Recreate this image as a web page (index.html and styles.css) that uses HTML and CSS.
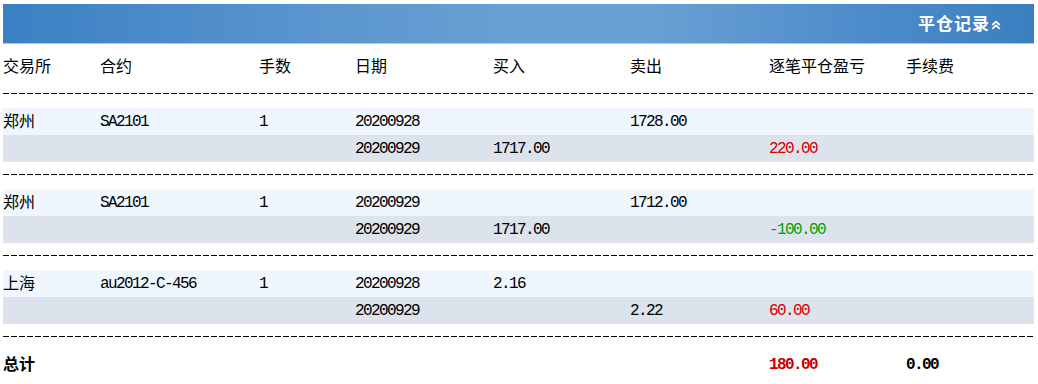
FILE: index.html
```html
<!DOCTYPE html>
<html lang="zh-CN">
<head>
<meta charset="utf-8">
<title>平仓记录</title>
<link rel="stylesheet" href="styles.css">
</head>
<body>
<div class="panel">
  <div class="panel-head">
    <span class="panel-title">平仓记录</span>
    <svg class="chev" width="10" height="10" viewBox="0 0 10 10" aria-hidden="true">
      <path d="M1.2 5 L5 1.6 L8.8 5" fill="none" stroke="#fff" stroke-width="1.7"/>
      <path d="M1.2 8.8 L5 5.4 L8.8 8.8" fill="none" stroke="#fff" stroke-width="1.7"/>
    </svg>
  </div>

  <div class="grid head">
    <div class="cn">交易所</div><div class="cn">合约</div><div class="cn">手数</div><div class="cn">日期</div>
    <div class="cn">买入</div><div class="cn">卖出</div><div class="cn">逐笔平仓盈亏</div><div class="cn">手续费</div>
  </div>
  <div class="sep"></div>

  <div class="grid row odd">
    <div class="cn">郑州</div><div>SA2101</div><div>1</div><div>20200928</div><div></div><div>1728.00</div><div></div><div></div>
  </div>
  <div class="grid row even">
    <div></div><div></div><div></div><div>20200929</div><div>1717.00</div><div></div><div class="red">220.00</div><div></div>
  </div>
  <div class="sep"></div>

  <div class="grid row odd">
    <div class="cn">郑州</div><div>SA2101</div><div>1</div><div>20200929</div><div></div><div>1712.00</div><div></div><div></div>
  </div>
  <div class="grid row even">
    <div></div><div></div><div></div><div>20200929</div><div>1717.00</div><div></div><div class="green">-100.00</div><div></div>
  </div>
  <div class="sep"></div>

  <div class="grid row odd">
    <div class="cn">上海</div><div>au2012-C-456</div><div>1</div><div>20200928</div><div>2.16</div><div></div><div></div><div></div>
  </div>
  <div class="grid row even">
    <div></div><div></div><div></div><div>20200929</div><div></div><div>2.22</div><div class="red">60.00</div><div></div>
  </div>
  <div class="sep"></div>

  <div class="grid row total">
    <div class="cn">总计</div><div></div><div></div><div></div><div></div><div></div><div class="red">180.00</div><div>0.00</div>
  </div>
</div>
</body>
</html>
```

FILE: styles.css
```css
html, body {
  background: #fff;
}
body {
  margin: 4px 4px 0 3px;
  color: #000;
  font-family: "Liberation Mono", "Noto Sans CJK SC", monospace;
  font-size: 16px;
}
.panel {
  width: 1031px;
}
.panel-head {
  height: 39px;
  border-bottom: 1px solid #a9c9ea;
  background: linear-gradient(to right, #3b80c4 0%, #5592cd 25%, #6aa1d4 50%, #6aa1d4 62%, #4f8dcc 82%, #3b7fc2 100%);
  display: flex;
  align-items: center;
  justify-content: flex-end;
  padding-right: 33px;
  gap: 1px;
}
.panel-title {
  color: #fff;
  font-family: "Noto Sans CJK SC", sans-serif;
  font-size: 17px;
  letter-spacing: 1px;
  font-weight: bold;
  line-height: 1;
  padding-bottom: 2px;
}
.chev {
  display: block;
  margin-top: 2px;
}
.grid {
  display: grid;
  grid-template-columns: 97px 159px 96px 138px 137px 139px 137px 1fr;
  align-items: center;
}
.head {
  height: 37px;
  padding-top: 9px;
  box-sizing: border-box;
}
.row {
  height: 27px;
  line-height: 1;
  letter-spacing: -1.6px;
}
.odd {
  background: #eff6fe;
}
.even {
  background: #dde3ec;
}
.cn {
  font-family: "Noto Sans CJK SC", sans-serif;
  font-size: 16px;
  letter-spacing: 0;
  line-height: 1;
  padding-bottom: 4px;
}
.sep {
  height: 27px;
  background-image: repeating-linear-gradient(to right, #000 0, #000 6px, transparent 6px, transparent 8px);
  background-size: 100% 1px;
  background-position: 0 12px;
  background-repeat: no-repeat;
}
.red {
  color: #d40000;
}
.green {
  color: #00a000;
}
.total {
  font-weight: bold;
}
.total .red {
  color: #c80000;
}
```
